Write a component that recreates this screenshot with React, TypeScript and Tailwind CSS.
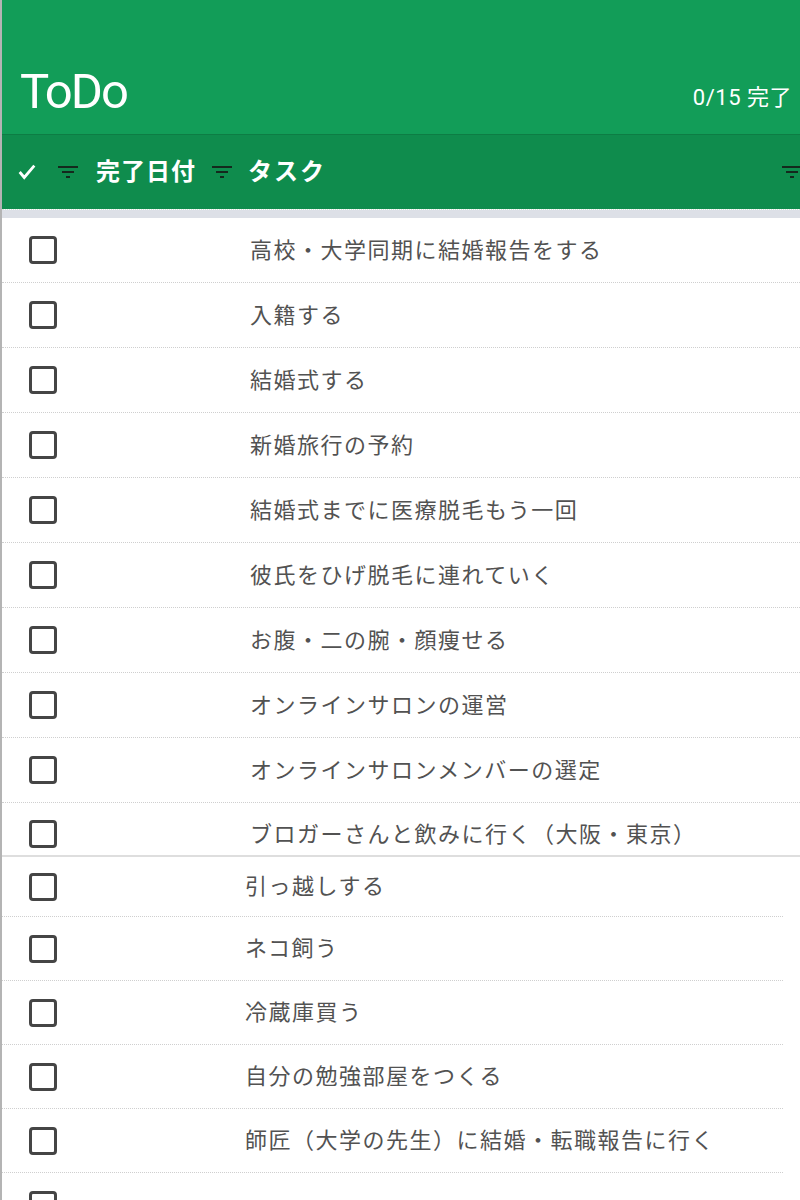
const firstTasks = [
  '高校・大学同期に結婚報告をする',
  '入籍する',
  '結婚式する',
  '新婚旅行の予約',
  '結婚式までに医療脱毛もう一回',
  '彼氏をひげ脱毛に連れていく',
  'お腹・二の腕・顔痩せる',
  'オンラインサロンの運営',
  'オンラインサロンメンバーの選定',
];

const secondTasks = ['ネコ飼う', '冷蔵庫買う', '自分の勉強部屋をつくる', '師匠（大学の先生）に結婚・転職報告に行く'];

const jp = { fontFamily: 'Roboto, "Noto Sans CJK JP", sans-serif' };

const FilterIcon = ({ className = '' }: { className?: string }) => (
  <svg viewBox="0 0 24 24" className={`h-6 w-6 shrink-0 ${className}`} fill="none" stroke="#14291d" strokeWidth={2.2}>
    <path d="M2 7h20M6 12h12M10 17h4" />
  </svg>
);

const Checkbox = () => (
  <div className="h-[28px] w-[28px] shrink-0 rounded-[4px] border-[3px] border-[#454545] bg-white" />
);

const Row = ({ text, h, indent, last }: { text: string; h: string; indent: string; last?: boolean }) => (
  <div className={`flex items-center ${h} ${last ? '' : 'border-b border-dotted border-[#cfcfcf]'}`}>
    <div className="w-[27px] shrink-0" />
    <Checkbox />
    <div className={`${indent} shrink-0`} />
    <span className="text-[22px] tracking-[1.5px] text-[#525252] whitespace-nowrap">{text}</span>
  </div>
);

export default function App() {
  return (
    <div className="h-[1200px] w-[800px] overflow-hidden border-l-2 border-[#b4b4b4] bg-white" style={jp}>
      <div className="flex h-[134px] items-end justify-between bg-[#129d58] pb-[18px] pl-[18px] pr-[8px]">
        <h1 className="text-[49px] leading-none tracking-[-2px] text-white" style={{ fontFamily: 'Roboto, sans-serif' }}>
          ToDo
        </h1>
        <span className="pb-[2px] text-[22px] tracking-[0.5px] text-white">0/15 完了</span>
      </div>

      <div className="overflow-hidden border-t border-[#0d7d44] bg-[#0f8c4d]">
        <div className="flex h-[74px] w-[820px] items-center pr-[18px]">
          <svg viewBox="0 0 24 24" className="ml-[14px] h-[22px] w-[22px]" fill="none" stroke="white" strokeWidth={3}>
            <path d="M4 12l5 6L20 5" />
          </svg>
          <FilterIcon className="ml-[18px]" />
          <span className="ml-[16px] text-[24px] font-bold text-white tracking-[1px]">完了日付</span>
          <FilterIcon className="ml-[14px]" />
          <span className="ml-[14px] text-[24px] font-bold text-white tracking-[2px]">タスク</span>
          <div className="flex-1" />
          <FilterIcon />
        </div>
      </div>
      <div className="border-t border-dotted border-[#d8e6dd]" />
      <div className="h-[8px] bg-[#dde0e7]" />

      <div>
        {firstTasks.map((t) => (
          <Row key={t} text={t} h="h-[65px]" indent="w-[193px]" />
        ))}
        <div className="h-[54px] overflow-hidden border-b-2 border-[#dedede]">
          <div className="-mt-[1px]">
            <Row text="ブロガーさんと飲みに行く（大阪・東京）" h="h-[64px]" indent="w-[193px]" last />
          </div>
        </div>
      </div>

      <div className="w-[781px]">
        <Row text="引っ越しする" h="h-[60px]" indent="w-[188px]" />
        {secondTasks.map((t) => (
          <Row key={t} text={t} h="h-[64px]" indent="w-[188px]" />
        ))}
        <Row text="" h="h-[64px]" indent="w-[188px]" />
      </div>
    </div>
  );
}
